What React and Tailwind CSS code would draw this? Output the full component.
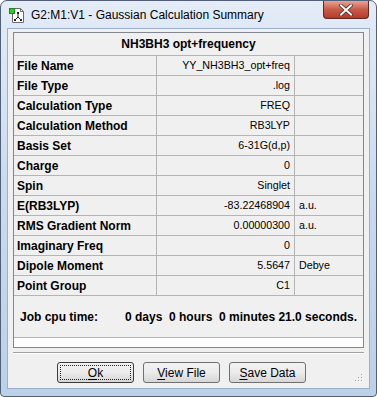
const rows = [
  ["File Name", "YY_NH3BH3_opt+freq", ""],
  ["File Type", ".log", ""],
  ["Calculation Type", "FREQ", ""],
  ["Calculation Method", "RB3LYP", ""],
  ["Basis Set", "6-31G(d,p)", ""],
  ["Charge", "0", ""],
  ["Spin", "Singlet", ""],
  ["E(RB3LYP)", "-83.22468904", "a.u."],
  ["RMS Gradient Norm", "0.00000300", "a.u."],
  ["Imaginary Freq", "0", ""],
  ["Dipole Moment", "5.5647", "Debye"],
  ["Point Group", "C1", ""],
];

function AppIcon() {
  return (
    <svg width="17" height="17" viewBox="0 0 17 17">
      <path d="M3.5 1.5h8l3 3v11h-11z" fill="#fff" stroke="#6b6b6b" />
      <path d="M11.5 1.5v3h3" fill="none" stroke="#6b6b6b" />
      <rect x="0.5" y="1.5" width="5" height="5" fill="#2ecc2e" stroke="#168a16" />
      <path d="M9 6v4M9 10l-3 3M9 10l3 3" stroke="#222" strokeWidth="1" fill="none" />
      <rect x="8" y="5" width="2" height="2" fill="#222" />
      <rect x="5" y="12" width="2" height="2" fill="#222" />
      <rect x="11" y="12" width="2" height="2" fill="#222" />
    </svg>
  );
}

function Btn({ k, rest, focus }) {
  return (
    <div
      className={
        "w-[77px] h-[21px] rounded-[3px] border flex items-center justify-center bg-gradient-to-b from-[#f2f2f2] via-[#ebebeb] to-[#d6d6d6] " +
        (focus ? "border-[#3c3c3c] p-[2px]" : "border-[#707070]")
      }
    >
      <div
        className={
          "w-full h-full flex items-center justify-center " +
          (focus ? "border border-dotted border-[#222]" : "")
        }
      >
        <span className="text-[12px] text-black leading-none font-['Liberation_Sans',Arial,sans-serif]">
          <span className="underline underline-offset-[2px]">{k}</span>
          {rest}
        </span>
      </div>
    </div>
  );
}

export default function App() {
  return (
    <div className="w-[377px] h-[397px] bg-white">
      <div className="w-[377px] h-[397px] flex flex-col rounded-t-[7px] rounded-b-[4px] border border-[#4f6078] bg-gradient-to-b from-[#e3ecf7] via-[#c9daee] to-[#bcd0e8] overflow-hidden">
        <div className="h-[27px] flex items-start shrink-0">
          <div className="ml-[8px] mt-[6px]">
            <AppIcon />
          </div>
          <div className="ml-[5px] mt-[6px] text-[12px] leading-[16px] text-black font-['Liberation_Sans',Arial,sans-serif]">
            G2:M1:V1 - Gaussian Calculation Summary
          </div>
          <div className="ml-auto mr-[7px] w-[46px] h-[18px] rounded-b-[4px] border border-t-0 border-[#5a2a24] bg-gradient-to-b from-[#e8a393] via-[#c85a48] to-[#b8392a] flex items-center justify-center">
            <svg width="14" height="12" viewBox="0 0 14 12">
              <path d="M2 1.5l10 9M12 1.5l-10 9" stroke="#4a2a26" strokeWidth="3.6" strokeLinecap="square" />
              <path d="M2 1.5l10 9M12 1.5l-10 9" stroke="#ffffff" strokeWidth="2" strokeLinecap="square" />
            </svg>
          </div>
        </div>

        <div className="flex-1 mx-[6px] mb-[7px] border border-[#9bb0ca] bg-[#f0f0f0] flex flex-col px-[5px] pt-[3px]">
          <div className="h-[316px] border border-[#828790] bg-white flex flex-col">
            <div className="h-[23px] shrink-0 border-b border-[#b4b4b4] bg-[#f0f0f0] flex items-center justify-center">
              <span className="text-[12px] font-bold text-black font-['Liberation_Sans',Arial,sans-serif]">
                NH3BH3 opt+frequency
              </span>
            </div>
            {rows.map(([l, v, u]) => (
              <div key={l} className="h-[20px] shrink-0 border-b border-[#b4b4b4] bg-[#f0f0f0] flex">
                <div className="w-[143px] border-r border-[#b4b4b4] pl-[3px] flex items-center text-[12px] font-bold text-black font-['Liberation_Sans',Arial,sans-serif]">
                  {l}
                </div>
                <div className="w-[138px] border-r border-[#b4b4b4] pr-[4px] flex items-center justify-end text-[10.7px] text-black font-['Liberation_Sans',Arial,sans-serif]">
                  {v}
                </div>
                <div className="flex-1 pl-[4px] flex items-center text-[10.7px] text-black font-['Liberation_Sans',Arial,sans-serif]">
                  {u}
                </div>
              </div>
            ))}
            <div className="h-[42px] shrink-0 border-b border-[#b4b4b4] bg-[#f0f0f0] flex items-center pl-[6px] text-[12px] font-bold text-black font-['Liberation_Sans',Arial,sans-serif]">
              <span className="w-[105px]">Job cpu time:</span>
              <span className="whitespace-pre">0 days  0 hours  0 minutes 21.0 seconds.</span>
            </div>
          </div>

          <div className="mt-[4px] h-[2px] border-t border-[#a0a0a0] border-b border-b-white" />

          <div className="mt-[8px] flex items-center pl-[44px] gap-[9px] relative">
            <Btn k="O" rest="k" focus />
            <Btn k="V" rest="iew File" />
            <Btn k="S" rest="ave Data" />
            <svg className="absolute right-[1px] top-[10px]" width="10" height="10" viewBox="0 0 10 10">
              {[[8, 2], [8, 5], [5, 5], [8, 8], [5, 8], [2, 8]].map(([x, y], i) => (
                <g key={i}>
                  <rect x={x} y={y} width="1" height="1" fill="#a0a0a0" />
                  <rect x={x + 1} y={y + 1} width="1" height="1" fill="#fff" />
                </g>
              ))}
            </svg>
          </div>
        </div>
      </div>
    </div>
  );
}
